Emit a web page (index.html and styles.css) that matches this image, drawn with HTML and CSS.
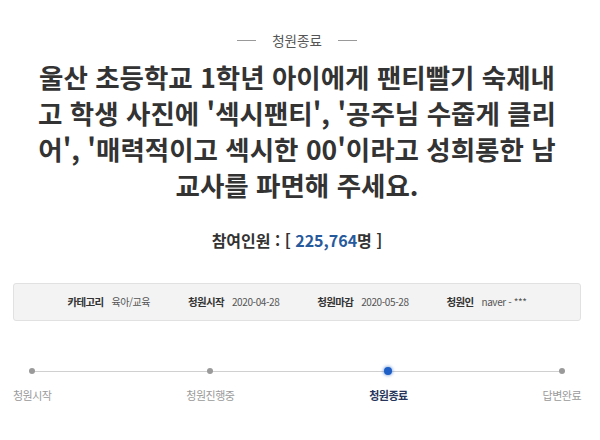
FILE: index.html
```html
<!DOCTYPE html>
<html lang="ko">
<head>
<meta charset="utf-8">
<link rel="stylesheet" href="styles.css">
</head>
<body>
<div class="page">
  <div class="status"><span class="status-text">청원종료</span></div>
  <h1 class="title">울산 초등학교 1학년 아이에게 팬티빨기 숙제내<br>고 학생 사진에 '섹시팬티', '공주님 수줍게 클리<br>어', '매력적이고 섹시한 00'이라고 성희롱한 남<br>교사를 파면해 주세요.</h1>
  <div class="count">참여인원 : [ <span class="count-num">225,764</span>명 ]</div>
  <div class="info">
    <div class="info-item"><span class="info-label">카테고리</span><span class="info-value">육아/교육</span></div>
    <div class="info-item"><span class="info-label">청원시작</span><span class="info-value">2020-04-28</span></div>
    <div class="info-item"><span class="info-label">청원마감</span><span class="info-value">2020-05-28</span></div>
    <div class="info-item"><span class="info-label">청원인</span><span class="info-value">naver - ***</span></div>
  </div>
  <div class="progress">
    <div class="step"><span class="dot"></span><span class="step-label">청원시작</span></div>
    <div class="step"><span class="dot"></span><span class="step-label">청원진행중</span></div>
    <div class="step step-active"><span class="dot"></span><span class="step-label">청원종료</span></div>
    <div class="step"><span class="dot"></span><span class="step-label">답변완료</span></div>
  </div>
</div>
</body>
</html>
```

FILE: styles.css
```css
html, body {
  margin: 0;
  padding: 0;
  background: #ffffff;
}

body {
  font-family: "Noto Sans CJK KR", "Noto Sans", sans-serif;
  color: #333333;
}

.page {
  width: 568px;
  padding: 30px 19px 0 13px;
}

.status {
  display: flex;
  justify-content: center;
  align-items: center;
  height: 20px;
}

.status-text {
  display: flex;
  align-items: center;
  gap: 16px;
  font-size: 13.5px;
  line-height: 20px;
  color: #555555;
}

.status-text::before,
.status-text::after {
  content: "";
  display: block;
  width: 19px;
  height: 1px;
  background: #999999;
}

.title {
  margin: 9px 0 0 0;
  font-size: 26.5px;
  line-height: 36px;
  font-weight: 700;
  text-align: center;
  color: #333333;
  white-space: nowrap;
}

.count {
  margin-top: 25px;
  text-align: center;
  font-size: 16px;
  line-height: 24px;
  font-weight: 700;
  color: #333333;
}

.count-num {
  color: #265a9c;
}

.info {
  margin-top: 31px;
  height: 36px;
  border: 1px solid #e1e1e1;
  border-radius: 3px;
  background: #f3f3f3;
  display: flex;
  justify-content: center;
  align-items: center;
  gap: 38px;
}

.info-item {
  display: flex;
  align-items: center;
  gap: 8px;
  line-height: 16px;
}

.info-label {
  font-size: 10.5px;
  font-weight: 700;
  color: #333333;
  letter-spacing: -0.7px;
}

.info-value {
  font-size: 10px;
  color: #555555;
  letter-spacing: -0.4px;
}

.progress {
  position: relative;
  margin-top: 46px;
  display: flex;
  justify-content: space-between;
}

.progress::before {
  content: "";
  position: absolute;
  left: 18px;
  right: 20px;
  top: 4px;
  height: 1px;
  background: #d0d0d0;
}

.step {
  position: relative;
  display: flex;
  flex-direction: column;
  align-items: center;
  gap: 12px;
}

.dot {
  width: 6px;
  height: 6px;
  margin: 1px 0;
  border-radius: 50%;
  background: #9a9a9a;
}

.step-label {
  font-size: 11px;
  line-height: 16px;
  color: #9a9a9a;
  letter-spacing: -0.5px;
}

.step-active .dot {
  width: 8px;
  height: 8px;
  margin: 0;
  background: #1d5fc6;
  box-shadow: 0 0 3px 1px rgba(29, 95, 198, 0.45);
}

.step-active .step-label {
  font-weight: 700;
  color: #27365a;
}
```
